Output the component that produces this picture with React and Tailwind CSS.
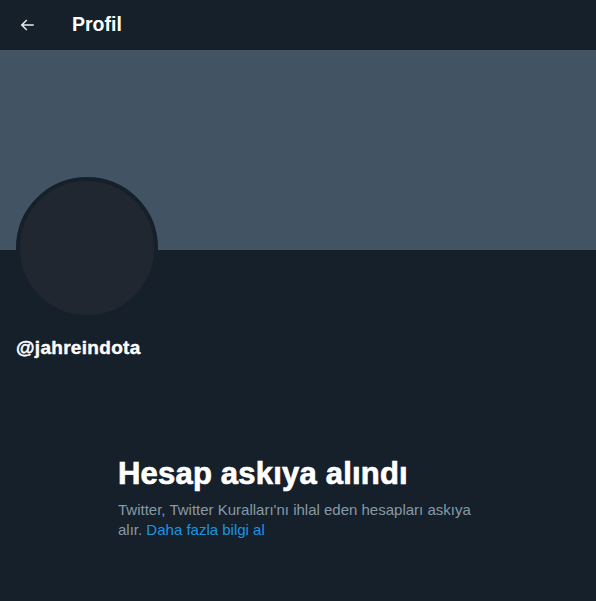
export default function App() {
  return (
    <div
      className="w-[596px] h-[601px] bg-[#15202b] overflow-hidden text-white"
      style={{ fontFamily: '"Liberation Sans", Arial, sans-serif' }}
    >
      <div className="h-[50px] flex items-center px-4">
        <div className="w-5 flex justify-center ml-[1px]">
          <svg viewBox="0 0 24 24" width="18" height="18" fill="#e7e9ea">
            <path d="M7.414 13l5.043 5.04-1.414 1.42L3.586 12l7.457-7.46 1.414 1.42L7.414 11H21v2H7.414z" />
          </svg>
        </div>
        <h1 className="ml-[35px] text-[19.5px] font-bold leading-none">Profil</h1>
      </div>
      <div className="h-[200px] bg-[#425364]" />
      <div className="px-4">
        <div className="-mt-[73px] w-[142px] h-[142px] rounded-full border-4 border-[#15202b] bg-[#202731]" />
        <div className="mt-[19px] text-[19px] font-bold leading-5 tracking-[0.3px] [-webkit-text-stroke:0.4px_white]">
          @jahreindota
        </div>
      </div>
      <div className="mx-auto max-w-[400px] px-5 mt-[98px]">
        <h2 className="text-[31px] font-bold leading-9 tracking-[0.2px] [-webkit-text-stroke:0.7px_white]">
          Hesap askıya alındı
        </h2>
        <p className="mt-[8px] text-[15px] leading-5 text-[#8899a6]">
          Twitter, Twitter Kuralları'nı ihlal eden hesapları askıya alır.{' '}
          <span className="text-[#1b95e0]">Daha fazla bilgi al</span>
        </p>
      </div>
    </div>
  );
}
